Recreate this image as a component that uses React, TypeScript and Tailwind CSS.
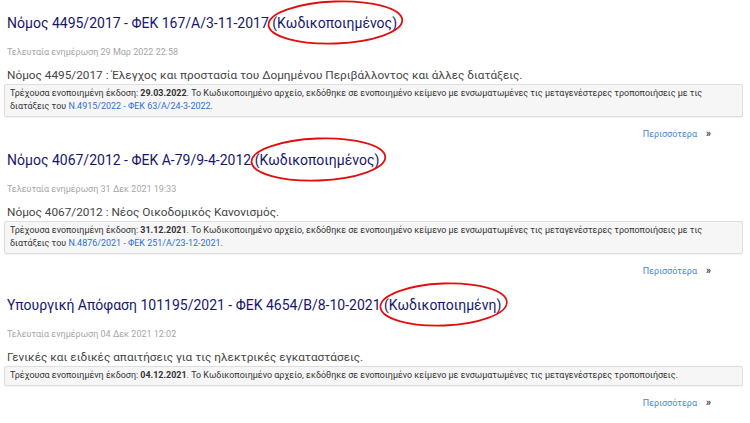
import React from "react";

interface Entry {
  title: string;
  tag: string;
  updated: string;
  summary: string;
  version: string;
  rest: string;
  link?: string;
  gap: string;
}

const entries: Entry[] = [
  {
    title: "Νόμος 4495/2017 - ΦΕΚ 167/Α/3-11-2017",
    tag: "(Κωδικοποιημένος)",
    updated: "Τελευταία ενημέρωση 29 Μαρ 2022 22:58",
    summary: "Νόμος 4495/2017 : Έλεγχος και προστασία του Δομημένου Περιβάλλοντος και άλλες διατάξεις.",
    version: "29.03.2022",
    rest: ". Το Κωδικοποιημένο αρχείο, εκδόθηκε σε ενοποιημένο κείμενο με ενσωματωμένες τις μεταγενέστερες τροποποιήσεις με τις διατάξεις του ",
    link: "N.4915/2022 - ΦΕΚ 63/Α/24-3-2022",
    gap: "mb-[9px]",
  },
  {
    title: "Νόμος 4067/2012 - ΦΕΚ Α-79/9-4-2012",
    tag: "(Κωδικοποιημένος)",
    updated: "Τελευταία ενημέρωση 31 Δεκ 2021 19:33",
    summary: "Νόμος 4067/2012 : Νέος Οικοδομικός Κανονισμός.",
    version: "31.12.2021",
    rest: ". Το Κωδικοποιημένο αρχείο, εκδόθηκε σε ενοποιημένο κείμενο με ενσωματωμένες τις μεταγενέστερες τροποποιήσεις με τις διατάξεις του ",
    link: "N.4876/2021 - ΦΕΚ 251/Α/23-12-2021",
    gap: "mb-[17px]",
  },
  {
    title: "Υπουργική Απόφαση 101195/2021 - ΦΕΚ 4654/Β/8-10-2021",
    tag: "(Κωδικοποιημένη)",
    updated: "Τελευταία ενημέρωση 04 Δεκ 2021 12:02",
    summary: "Γενικές και ειδικές απαιτήσεις για τις ηλεκτρικές εγκαταστάσεις.",
    version: "04.12.2021",
    rest: ". Το Κωδικοποιημένο αρχείο, εκδόθηκε σε ενοποιημένο κείμενο με ενσωματωμένες τις μεταγενέστερες τροποποιήσεις.",
    gap: "mb-0",
  },
];

// hand-drawn style red ring around the "codified" tag
const Circled: React.FC<{ text: string }> = ({ text }) => (
  <span className="relative inline-block">
    {text}
    <svg
      className="absolute left-[-5px] top-[-13px] w-[calc(100%+12px)] h-[45px] pointer-events-none overflow-visible"
      viewBox="0 0 140 45"
      preserveAspectRatio="none"
    >
      <ellipse
        cx="70"
        cy="22.5"
        rx="68.5"
        ry="21"
        fill="none"
        stroke="#e30d0d"
        strokeWidth="1.8"
        transform="rotate(-2 70 22.5)"
      />
    </svg>
  </span>
);

export default function App() {
  return (
    <div className="w-[750px] h-[423px] bg-white overflow-hidden font-['Roboto',sans-serif] pt-[13px]">
      {entries.map((e) => (
        <div key={e.title} className={e.gap}>
          <h2 className="pl-[7px] text-[14px] leading-[20px] text-[#17176b]">
            {e.title} <Circled text={e.tag} />
          </h2>
          <div className="pl-[7px] mt-[13px] text-[9px] leading-[12px] text-[#a6a6a6]">{e.updated}</div>
          <div className="pl-[7px] mt-[10px] text-[11.8px] leading-[14px] text-[#454545]">{e.summary}</div>
          <div className="mx-[4px] mt-[2px] w-[739px] border border-[#dedede] bg-[#f6f6f6] rounded-[2px] px-[5px] pt-[2px] pb-[3px] text-[8.95px] leading-[13px] text-[#333] shadow-[0_1px_1px_rgba(0,0,0,0.05)]">
            Τρέχουσα ενοποιημένη έκδοση: <b>{e.version}</b>
            {e.rest}
            {e.link && (
              <>
                <span className="text-[#2f6fd6]">{e.link}</span>.
              </>
            )}
          </div>
          <div className="flex justify-end items-center gap-[9px] pr-[39px] mt-[10px] text-[9px] leading-[14px]">
            <span className="text-[#4a86d0]">Περισσότερα</span>
            <span className="text-[#333] font-bold text-[10px]">»</span>
          </div>
        </div>
      ))}
    </div>
  );
}
